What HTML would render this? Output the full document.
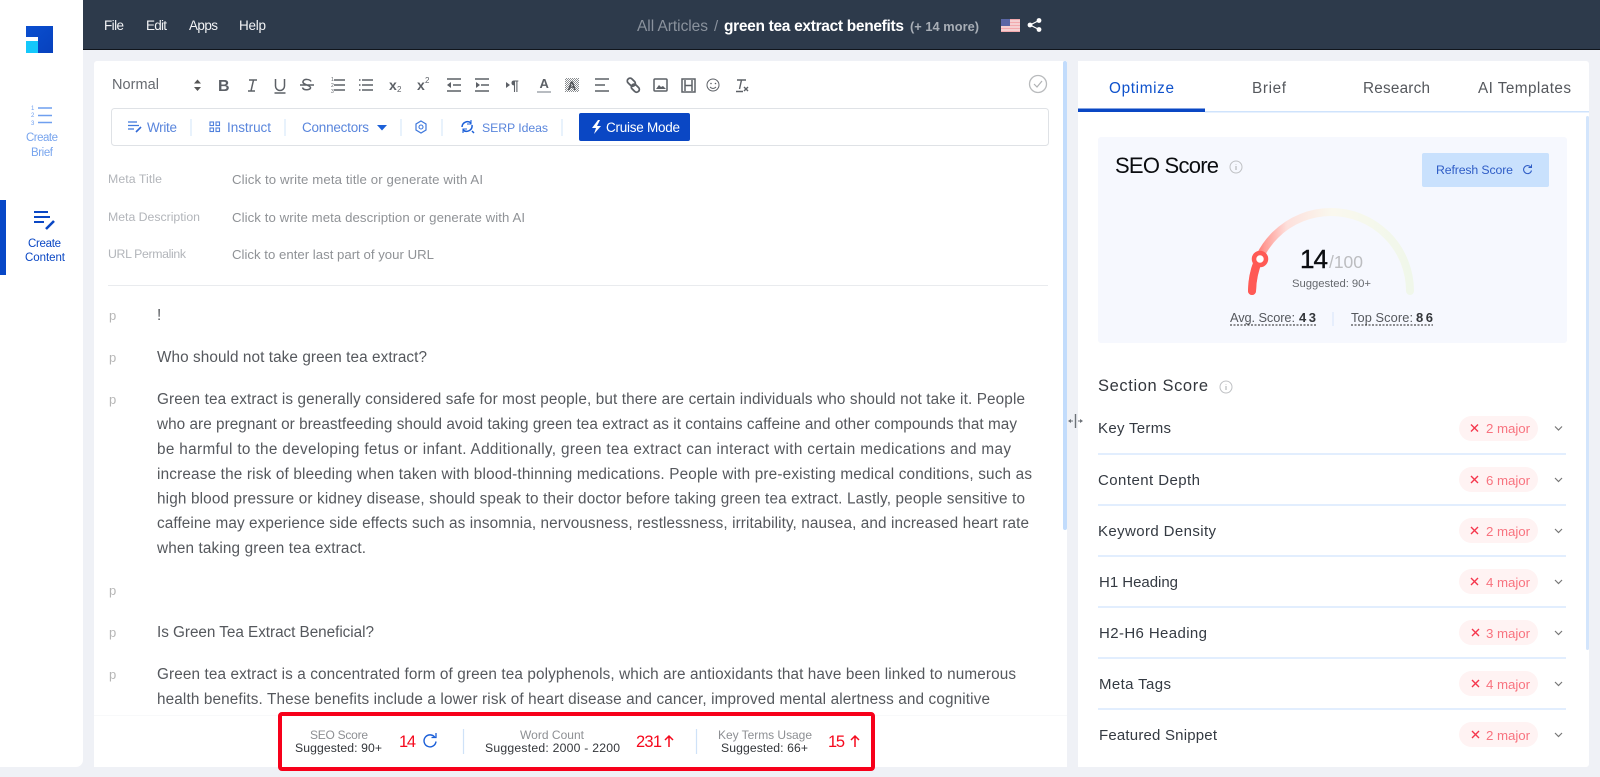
<!DOCTYPE html>
<html><head><meta charset="utf-8"><title>Create Content</title>
<style>
html,body{margin:0;padding:0;width:1600px;height:777px;overflow:hidden;background:#eff1f6}
svg{display:block}
text{font-family:"Liberation Sans",sans-serif}
.n{fill:#f2f3f5;font-size:13.500px}
.tb{fill:none;stroke:#5c6066;stroke-width:1.5}
.tf{fill:#5c6066}
.bt{fill:#5a86dc;font-size:13.500px}
.ml{fill:#b2b5ba;font-size:12.300px}
.mv{fill:#8f9296;font-size:13.200px}
.pm{fill:#b5b5b5;font-size:13px}
.body{fill:#55585d;font-size:15.300px}
.sep{stroke:#d9e8fb;stroke-width:1.2}
.row{fill:#343a42;font-size:15px}
.rs{stroke:#d9e9fd;stroke-width:1.6}
.pill{fill:#fff3f3}
.maj{fill:#f8737f;font-size:13.300px}
.x{stroke:#f5364c;stroke-width:1.4;fill:none}
.ch{stroke:#777;stroke-width:1.2;fill:none}
.bl{fill:#8d8f93;font-size:12px}
.bs{fill:#33363a;font-size:12.200px}
.red{fill:#f5091d;font-size:16.500px}
.ar{stroke:#f5091d;stroke-width:1.5;fill:none}
.tab{font-size:15.300px}
</style></head>
<body>
<svg width="1600" height="777" viewBox="0 0 1600 777" xmlns="http://www.w3.org/2000/svg">
<defs>
<linearGradient id="g" gradientUnits="userSpaceOnUse" x1="1252" y1="0" x2="1411" y2="0">
<stop offset="0" stop-color="#ff5d57"/><stop offset=".08" stop-color="#ff9c96"/><stop offset=".22" stop-color="#fde0dc"/><stop offset=".5" stop-color="#faf8ee"/><stop offset="1" stop-color="#f0f7ea"/>
</linearGradient>
<linearGradient id="lg" x1="0" y1="0" x2="1" y2="1"><stop offset="0" stop-color="#0a4fd0"/><stop offset="1" stop-color="#0741bd"/></linearGradient>
<pattern id="hatch" width="2" height="2" patternUnits="userSpaceOnUse"><rect width="1" height="1" fill="#8a8d90"/><rect x="1" y="1" width="1" height="1" fill="#8a8d90"/></pattern>
</defs>
<rect width="1600" height="777" fill="#eff1f6"/>

<!-- sidebar -->
<path d="M0 0H83V760a7 7 0 0 1-7 7H0Z" fill="#fff"/>
<path d="M26 26H53V53H38V37H26Z" fill="url(#lg)"/>
<rect x="26" y="41" width="12" height="12" fill="#14c8fb"/>
<path d="M38 108H52M38 115.500H52M38 122.500H52" stroke="#6f9fef" stroke-width="1.600" fill="none"/>
<text x="31" y="110" font-size="6" fill="#6f9fef">1</text><text x="31" y="117" font-size="6" fill="#6f9fef">2</text><text x="31" y="125" font-size="6" fill="#6f9fef">3</text>
<text x="26" y="141" textLength="32" font-size="11.500" fill="#78a5ee">Create</text>
<text x="31" y="156" textLength="22" font-size="11.500" fill="#78a5ee">Brief</text>
<rect x="0" y="200" width="6" height="75" fill="#0747c7"/>
<g stroke="#0a47c4" stroke-width="2" fill="none"><path d="M34 212H48M34 217H50M34 222H44"/><path d="M46 229L54 221" stroke-width="2.600"/></g>
<text x="28" y="247" textLength="33" font-size="11.500" fill="#0a47c4">Create</text>
<text x="25" y="261" textLength="40" font-size="11.500" fill="#0a47c4">Content</text>

<!-- header -->
<rect x="83" y="0" width="1517" height="49" fill="#2d3a4b"/>
<rect x="83" y="49" width="1517" height="1" fill="#10151c"/>
<text class="n" x="104" y="30" textLength="20">File</text>
<text class="n" x="146" y="30" textLength="21">Edit</text>
<text class="n" x="189" y="30" textLength="29">Apps</text>
<text class="n" x="239" y="30" textLength="27">Help</text>
<text x="637" y="31" textLength="71" font-size="15.500" fill="#8a929d">All Articles</text>
<text x="714" y="31" font-size="15" fill="#8a929d">/</text>
<text x="724" y="31" textLength="180" font-size="15.500" font-weight="700" fill="#fff">green tea extract benefits</text>
<text x="910" y="31" textLength="69" font-size="12.800" font-weight="700" fill="#a8aeb6">(+ 14 more)</text>
<rect x="1001" y="19" width="19" height="13" fill="#f2a9ad"/>
<path d="M1001 21h19M1001 24h19M1001 27h19M1001 30h19" stroke="#f7e6e7" stroke-width="1.200"/>
<rect x="1001" y="19" width="9" height="7" fill="#5a66a5"/>
<g fill="#fff"><circle cx="1039" cy="20.500" r="2.400"/><circle cx="1039" cy="29.500" r="2.400"/><circle cx="1030" cy="25" r="2.400"/></g>
<path d="M1039 20.500L1030 25L1039 29.500" stroke="#fff" stroke-width="1.200" fill="none"/>

<!-- editor panel -->
<path d="M97 61H1067V767H97a3 3 0 0 1-3-3V64a3 3 0 0 1 3-3Z" fill="#fff"/>
<rect x="1063" y="61" width="4" height="469" rx="2" fill="#c2dcfc"/>

<!-- toolbar -->
<text x="112" y="89" textLength="47" font-size="14.500" fill="#666a70">Normal</text>
<path d="M194 83.500L197.500 79.500L201 83.500ZM194 87L197.500 91L201 87Z" fill="#555"/>
<text x="218" y="91" font-size="16" font-weight="700" fill="#5c6066">B</text>
<path class="tb" d="M249 80H257M248 91H255M253.500 80L251 91"/>
<path class="tb" d="M275.500 79v7a4.500 4.500 0 0 0 9 0v-7M274.500 93H285.500"/>
<path class="tb" d="M311 81.500c-1-2.500-7-3-8 0s7 3.500 7.500 6-7 3.500-8 0M300 85H314"/>
<path class="tb" d="M334 80H345M334 85H345M334 90H345"/>
<text x="331" y="81" font-size="5" fill="#5c6066">1</text><text x="331" y="87" font-size="5" fill="#5c6066">2</text><text x="331" y="93" font-size="5" fill="#5c6066">3</text>
<path class="tb" d="M362 80H373M362 85H373M362 90H373M359 80h1.500M359 85h1.500M359 90h1.500"/>
<text x="389" y="90" font-size="14" font-weight="700" fill="#5c6066">x</text><text x="397" y="92" font-size="8" fill="#5c6066">2</text>
<text x="417" y="90" font-size="14" font-weight="700" fill="#5c6066">x</text><text x="425" y="83" font-size="8" fill="#5c6066">2</text>
<path class="tb" d="M447 79H461M453 85H461M447 91H461"/><path class="tf" d="M447 85L451 82V88Z"/>
<path class="tb" d="M475 79H489M481 85H489M475 91H489"/><path class="tf" d="M480 85L476 82V88Z"/>
<path class="tf" d="M506 82L510 85L506 88Z"/><text x="511" y="90" font-size="14" font-weight="700" fill="#5c6066">¶</text>
<text x="539.500" y="88" font-size="13" font-weight="700" fill="#5c6066">A</text><path stroke="#9aa0a6" stroke-width="1.400" d="M537 92H551"/>
<rect x="565" y="78" width="14" height="14" fill="url(#hatch)"/><text x="567.500" y="90" font-size="12" font-weight="700" fill="#505357">A</text>
<path class="tb" d="M595 79H609M595 85H605M595 91H609"/>
<g fill="none" stroke="#5c6066" stroke-width="1.800"><rect x="627" y="79.500" width="9" height="5.500" rx="2.700" transform="rotate(45 631.500 82)"/><rect x="631" y="85.500" width="9" height="5.500" rx="2.700" transform="rotate(45 635.500 88)"/></g>
<rect x="654" y="79" width="13" height="12" rx="1" class="tb"/><path class="tf" d="M656 89l3-4 2 2 2-1 3 3Z"/>
<rect x="682" y="79" width="13" height="13" class="tb" stroke-width="2"/><path class="tb" d="M685 80v11M692 80v11M685 85.500h7"/>
<circle cx="713" cy="85" r="6" fill="none" stroke="#5c6066" stroke-width="1"/><path d="M710 87q3 3 6 0" stroke="#5c6066" fill="none"/><circle cx="711" cy="83.500" r=".8" class="tf"/><circle cx="715.500" cy="83.500" r=".8" class="tf"/>
<path stroke="#5c6066" stroke-width="1.400" fill="none" d="M737 80H746M741.500 80L739.500 89"/>
<path stroke="#5c6066" stroke-width="1.400" fill="none" d="M736 91.500H743M744 87l4 4M748 87l-4 4"/>
<circle cx="1038" cy="84" r="8.500" fill="#fff" stroke="#b9bbbd" stroke-width="1.300"/><path d="M1034 84l3 3 5-6" stroke="#b0b2b4" stroke-width="1.200" fill="none"/>

<!-- action bar -->
<rect x="111.500" y="108.500" width="937" height="37" rx="3" fill="#fff" stroke="#dfe2e6"/>
<path d="M128 122H137M128 125.500H139M128 129H134" stroke="#3f78dc" stroke-width="1.300" fill="none"/><path d="M136 132L141 127" stroke="#2f68d6" stroke-width="1.600"/>
<text class="bt" x="147" y="132" textLength="30">Write</text>
<path class="sep" d="M191 119V136M285 119V136M401 119V136M442 119V136M562 119V136"/>
<g fill="none" stroke="#4f80dc" stroke-width="1.100"><rect x="210" y="122" width="3.500" height="3.500"/><rect x="216" y="122" width="3.500" height="3.500"/><rect x="210" y="128" width="3.500" height="3.500"/><rect x="216" y="128" width="3.500" height="3.500"/></g>
<text class="bt" x="227" y="132" textLength="44">Instruct</text>
<text class="bt" x="302" y="132" textLength="67">Connectors</text>
<path d="M377 125H387L382 130.500Z" fill="#1b60d8"/>
<circle cx="421" cy="127" r="2" fill="none" stroke="#3f78dc" stroke-width="1.100"/><path d="M421 121l5 3v6l-5 3-5-3v-6Z" fill="none" stroke="#3f78dc" stroke-width="1.200"/>
<path d="M462 127a5.500 5.500 0 0 1 9-4M472 125a5.500 5.500 0 0 1-9 5M472 131l2 2" stroke="#1b5fd8" stroke-width="1.500" fill="none"/><path d="M471 120v4h-4M463 133v-4h4" stroke="#1b5fd8" stroke-width="1.100" fill="none"/>
<text x="482" y="132" textLength="66" font-size="12.300" fill="#5a86dc">SERP Ideas</text>
<rect x="579" y="113" width="111" height="28" rx="2" fill="#0a47c4"/>
<path d="M598 120L592 128H596L594 134L601 126H597L600 120Z" fill="#fff"/>
<text x="606" y="132" textLength="74" font-size="13.500" fill="#fff">Cruise Mode</text>

<!-- meta rows -->
<text class="ml" x="108" y="183" textLength="54">Meta Title</text>
<text class="ml" x="108" y="221" textLength="92">Meta Description</text>
<text class="ml" x="108" y="258" textLength="78">URL Permalink</text>
<text class="mv" x="232" y="184" textLength="251">Click to write meta title or generate with AI</text>
<text class="mv" x="232" y="222" textLength="293">Click to write meta description or generate with AI</text>
<text class="mv" x="232" y="259" textLength="202">Click to enter last part of your URL</text>
<rect x="108" y="285" width="940" height="1" fill="#e9ebee"/>

<!-- body -->
<text class="pm" x="109" y="320">p</text><text class="body" x="157" y="320">!</text>
<text class="pm" x="109" y="362">p</text><text class="body" x="157" y="362" textLength="270">Who should not take green tea extract?</text>
<text class="pm" x="109" y="404">p</text>
<text class="body" x="157" y="404" textLength="868">Green tea extract is generally considered safe for most people, but there are certain individuals who should not take it. People</text>
<text class="body" x="157" y="429" textLength="860">who are pregnant or breastfeeding should avoid taking green tea extract as it contains caffeine and other compounds that may</text>
<text class="body" x="157" y="454" textLength="854">be harmful to the developing fetus or infant. Additionally, green tea extract can interact with certain medications and may</text>
<text class="body" x="157" y="479" textLength="875">increase the risk of bleeding when taken with blood-thinning medications. People with pre-existing medical conditions, such as</text>
<text class="body" x="157" y="503.500" textLength="868">high blood pressure or kidney disease, should speak to their doctor before taking green tea extract. Lastly, people sensitive to</text>
<text class="body" x="157" y="528" textLength="872">caffeine may experience side effects such as insomnia, nervousness, restlessness, irritability, nausea, and increased heart rate</text>
<text class="body" x="157" y="553" textLength="209">when taking green tea extract.</text>
<text class="pm" x="109" y="595">p</text>
<text class="pm" x="109" y="637">p</text><text class="body" x="157" y="637" textLength="217">Is Green Tea Extract Beneficial?</text>
<text class="pm" x="109" y="679">p</text>
<text class="body" x="157" y="679" textLength="859">Green tea extract is a concentrated form of green tea polyphenols, which are antioxidants that have been linked to numerous</text>
<text class="body" x="157" y="704" textLength="833">health benefits. These benefits include a lower risk of heart disease and cancer, improved mental alertness and cognitive</text>

<!-- bottom bar -->
<rect x="94" y="716" width="973" height="51" fill="#fff"/>
<rect x="94" y="715" width="973" height="1" fill="#f8f9fa"/>
<rect x="280" y="714" width="593" height="55" rx="2" fill="#fff" stroke="#f7001a" stroke-width="4"/>
<text class="bl" x="310" y="739" textLength="58">SEO Score</text>
<text class="bs" x="295" y="752" textLength="87">Suggested: 90+</text>
<text class="red" x="399" y="747" textLength="17">14</text>
<path d="M435 737.500a6 6 0 1 0 1 4" stroke="#1b5fd8" stroke-width="1.400" fill="none"/><path d="M431.500 737.500h4.500v-4.500" stroke="#1b5fd8" stroke-width="1.300" fill="none"/>
<path d="M463.500 729V754M696.500 729V754" stroke="#cfe2f8" stroke-width="1.200"/>
<text class="bl" x="520" y="739" textLength="64">Word Count</text>
<text class="bs" x="485" y="752" textLength="135">Suggested: 2000 - 2200</text>
<text class="red" x="636" y="747" textLength="26">231</text>
<path class="ar" d="M669 747V736M665 740L669 736L673 740"/>
<text class="bl" x="718" y="739" textLength="94">Key Terms Usage</text>
<text class="bs" x="721" y="752" textLength="87">Suggested: 66+</text>
<text class="red" x="828" y="747" textLength="17">15</text>
<path class="ar" d="M855 747V736M851 740L855 736L859 740"/>

<!-- right panel -->
<path d="M1078 61H1586a3 3 0 0 1 3 3V764a3 3 0 0 1-3 3H1078Z" fill="#fff"/>
<text class="tab" x="1109" y="93" textLength="65" fill="#0f52cc">Optimize</text>
<text class="tab" x="1252" y="93" textLength="34" fill="#55585d">Brief</text>
<text class="tab" x="1363" y="93" textLength="67" fill="#55585d">Research</text>
<text class="tab" x="1478" y="93" textLength="93" fill="#55585d">AI Templates</text>
<rect x="1205" y="111" width="384" height="1.500" fill="#cfe3fc"/>
<rect x="1078" y="108.500" width="127" height="3.500" fill="#0a47c4"/>
<rect x="1586" y="116" width="3" height="534" rx="1.500" fill="#d3e5fc"/>

<!-- score card -->
<rect x="1098" y="137" width="469" height="206" rx="3" fill="#f6f8fe"/>
<text x="1115" y="173" textLength="104" font-size="22" fill="#0b0d10">SEO Score</text>
<circle cx="1236" cy="167" r="6" fill="none" stroke="#bfc1c4" stroke-width="1"/><path d="M1236 164v.5M1236 166v4" stroke="#aaacaf"/>
<rect x="1422" y="153" width="127" height="34" rx="2" fill="#c9e1fd"/>
<text x="1436" y="174" textLength="77" font-size="12.300" fill="#2f5dc6">Refresh Score</text>
<path d="M1531 167.500a4 4 0 1 0 .5 3" stroke="#2f5dc6" stroke-width="1.100" fill="none"/><path d="M1528.500 167.500h3v-3" stroke="#2f5dc6" fill="none"/>

<path d="M1252 291A79 79 0 0 1 1410 291" fill="none" stroke="url(#g)" stroke-width="8" stroke-linecap="round"/>
<path d="M1252 291Q1252.500 274 1259 259" fill="none" stroke="#ff5a55" stroke-width="8" stroke-linecap="round"/>
<circle cx="1260" cy="259" r="6" fill="#fff" stroke="#ff5a55" stroke-width="4.500"/>
<text x="1300" y="268" textLength="28" font-size="26" stroke="#0b0d10" stroke-width=".4" fill="#0b0d10">14</text>
<text x="1329" y="268" textLength="34" font-size="17.500" fill="#bcbdc0">/100</text>
<text x="1292" y="287" textLength="79" font-size="11.300" fill="#66696e">Suggested: 90+</text>
<text x="1230" y="322" textLength="65" font-size="12.800" fill="#55585d">Avg. Score:</text>
<text x="1299" y="322" textLength="17" font-size="13" font-weight="700" fill="#33363a">43</text>
<path d="M1230 325H1317M1351 325H1433" stroke="#222" stroke-width="1" stroke-dasharray="2 1.500"/>
<path d="M1333 312V326" stroke="#d5e5f9"/>
<text x="1351" y="322" textLength="62" font-size="12.800" fill="#55585d">Top Score:</text>
<text x="1416" y="322" textLength="17" font-size="13" font-weight="700" fill="#33363a">86</text>

<!-- section score -->
<text x="1098" y="391" textLength="110" font-size="16.500" fill="#33373d">Section Score</text>
<circle cx="1226" cy="387" r="6" fill="none" stroke="#bfc1c4" stroke-width="1"/><path d="M1226 384v.5M1226 386v4" stroke="#aaacaf"/>

<text class="row" x="1098" y="433" textLength="73">Key Terms</text>
<rect class="pill" x="1459" y="416" width="79" height="25" rx="12.500"/><path class="x" d="M1471 424.500l7 7M1478 424.500l-7 7"/><text class="maj" x="1486" y="433" textLength="44">2 major</text><path class="ch" d="M1555 426.500l3.500 3.500 3.500-3.500"/>
<path class="rs" d="M1098 454H1566M1098 505H1566M1098 556H1566M1098 607H1566M1098 658H1566M1098 709H1566"/>

<text class="row" x="1098" y="485" textLength="102">Content Depth</text>
<rect class="pill" x="1459" y="467" width="79" height="25" rx="12.500"/><path class="x" d="M1471 476l7 7M1478 476l-7 7"/><text class="maj" x="1486" y="485" textLength="44">6 major</text><path class="ch" d="M1555 478l3.500 3.500 3.500-3.500"/>

<text class="row" x="1098" y="536" textLength="118">Keyword Density</text>
<rect class="pill" x="1459" y="518" width="79" height="25" rx="12.500"/><path class="x" d="M1471 527l7 7M1478 527l-7 7"/><text class="maj" x="1486" y="536" textLength="44">2 major</text><path class="ch" d="M1555 529l3.500 3.500 3.500-3.500"/>

<text class="row" x="1099" y="587" textLength="79">H1 Heading</text>
<rect class="pill" x="1459" y="569" width="79" height="25" rx="12.500"/><path class="x" d="M1471 578l7 7M1478 578l-7 7"/><text class="maj" x="1486" y="587" textLength="44">4 major</text><path class="ch" d="M1555 580l3.500 3.500 3.500-3.500"/>

<text class="row" x="1099" y="638" textLength="108">H2-H6 Heading</text>
<rect class="pill" x="1459" y="620" width="79" height="25" rx="12.500"/><path class="x" d="M1472 629l7 7M1479 629l-7 7"/><text class="maj" x="1486" y="638" textLength="44">3 major</text><path class="ch" d="M1555 631l3.500 3.500 3.500-3.500"/>

<text class="row" x="1099" y="689" textLength="72">Meta Tags</text>
<rect class="pill" x="1459" y="671" width="79" height="25" rx="12.500"/><path class="x" d="M1472 680l7 7M1479 680l-7 7"/><text class="maj" x="1486" y="689" textLength="44">4 major</text><path class="ch" d="M1555 682l3.500 3.500 3.500-3.500"/>

<text class="row" x="1099" y="740" textLength="118">Featured Snippet</text>
<rect class="pill" x="1459" y="722" width="79" height="25" rx="12.500"/><path class="x" d="M1472 731l7 7M1479 731l-7 7"/><text class="maj" x="1486" y="740" textLength="44">2 major</text><path class="ch" d="M1555 733l3.500 3.500 3.500-3.500"/>

<!-- resizer -->
<path d="M1075.500 414V428" stroke="#6d7278" stroke-width="1.400"/>
<path d="M1069 421H1073M1078 421H1082" stroke="#6d7278"/>
<path d="M1068 421L1071 419V423ZM1083 421L1080 419V423Z" fill="#6d7278"/>
</svg>
</body></html>
